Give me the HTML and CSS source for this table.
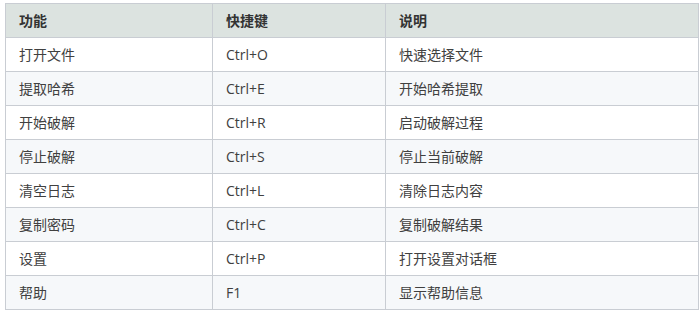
FILE: index.html
```html
<!DOCTYPE html>
<html lang="zh-CN">
<head>
<meta charset="utf-8">
<link rel="stylesheet" href="styles.css">
</head>
<body>
<div class="wrap">
<table class="keys">
  <colgroup>
    <col class="c1"><col class="c2"><col class="c3">
  </colgroup>
  <thead>
    <tr><th>功能</th><th>快捷键</th><th>说明</th></tr>
  </thead>
  <tbody>
    <tr><td>打开文件</td><td>Ctrl+O</td><td>快速选择文件</td></tr>
    <tr><td>提取哈希</td><td>Ctrl+E</td><td>开始哈希提取</td></tr>
    <tr><td>开始破解</td><td>Ctrl+R</td><td>启动破解过程</td></tr>
    <tr><td>停止破解</td><td>Ctrl+S</td><td>停止当前破解</td></tr>
    <tr><td>清空日志</td><td>Ctrl+L</td><td>清除日志内容</td></tr>
    <tr><td>复制密码</td><td>Ctrl+C</td><td>复制破解结果</td></tr>
    <tr><td>设置</td><td>Ctrl+P</td><td>打开设置对话框</td></tr>
    <tr><td>帮助</td><td>F1</td><td>显示帮助信息</td></tr>
  </tbody>
</table>
</div>
</body>
</html>
```
FILE: styles.css
```css
html, body {
  margin: 0;
  padding: 0;
  background: #ffffff;
}
.wrap {
  padding: 3px 2px 0 5px;
}
.keys {
  width: 693px;
  border-collapse: collapse;
  table-layout: fixed;
  font-family: "Open Sans", "Noto Sans CJK SC", sans-serif;
  font-size: 14px;
  color: #404040;
}
.c1 { width: 207px; }
.c2 { width: 173px; }
.c3 { width: 313px; }
.keys th, .keys td {
  border: 1px solid #c9cdd3;
  height: 34px;
  padding: 0 13px;
  box-sizing: border-box;
  text-align: left;
  vertical-align: middle;
  line-height: 20px;
}
.keys th {
  background: #dce3e0;
  font-weight: bold;
  color: #333333;
}
.keys tbody tr:nth-child(even) td {
  background: #f6f8fa;
}
```
